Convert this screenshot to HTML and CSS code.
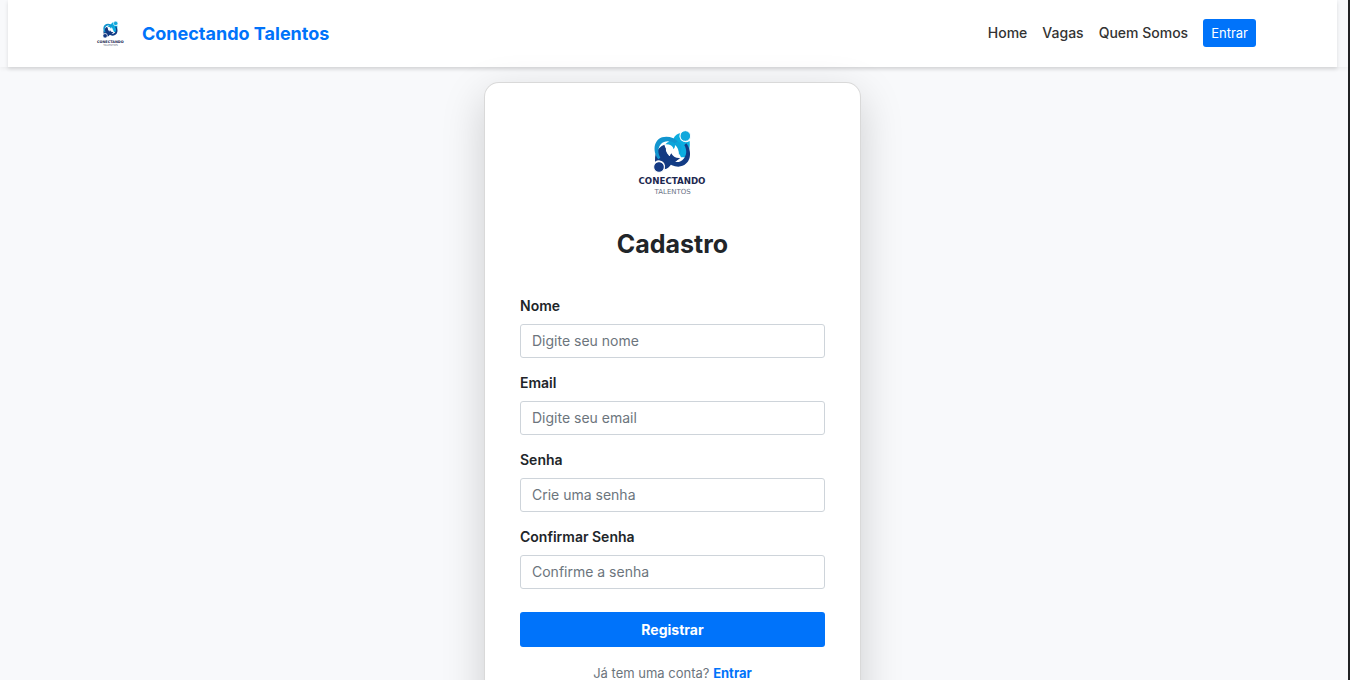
FILE: index.html
```html
<!DOCTYPE html>
<html lang="pt-BR">
<head>
<meta charset="utf-8">
<meta name="viewport" content="width=device-width, initial-scale=1">
<title>Conectando Talentos - Cadastro</title>
<link rel="stylesheet" href="styles.css">
</head>
<body>
<div class="page">
  <header class="topbar">
    <nav class="navbar">
      <a class="brand" href="#"><svg class="brand-logo" viewBox="0 0 285 255" role="img" aria-label="Logo"><use href="#logo"/></svg>Conectando Talentos</a>
      <div class="links">
        <a class="nav-link" href="#">Home</a>
        <a class="nav-link" href="#">Vagas</a>
        <a class="nav-link" href="#">Quem Somos</a>
        <a class="nav-button" href="#">Entrar</a>
      </div>
    </nav>
  </header>
  <main class="content">
    <section class="card">
      <svg class="card-logo" viewBox="0 0 285 255" role="img" aria-label="Conectando Talentos">
        <g id="logo">
          <path fill="#0bade0" d="M145 56Q154 41 165 40Q160 64 182 67Q188 67 194 63Q197 88 184 112L168 112Q160 84 122 72Q132 62 145 56Z"/>
          <path fill="#143a82" d="M139 132Q130 147 119 148Q124 124 102 121Q96 121 90 125Q88 98 103 84Q110 76 118 74Q124 104 162 116Q152 126 139 132Z"/>
          <path fill="#fff" d="M123 72Q140 62 155 76Q168 92 163 112Q146 118 131 106Q116 90 123 72Z"/>
          <path fill="#0da4da" d="M121 73Q142 72 146 88Q151 82 150 75Q162 84 162 106Q176 88 165 68Q145 54 121 73Z"/>
          <path fill="#143a82" d="M166 114Q146 116 139 100Q133 106 134 113Q122 104 122 82Q106 98 119 120Q139 134 166 114Z"/>
          <path fill="#1295cf" d="M100 118C80 92 86 50 124 50C138 50 150 56 158 64L150 70C138 62 118 60 108 72C98 84 98 98 106 113Z"/>
          <path fill="#123c85" d="M184 70C204 96 198 138 160 140C146 140 134 134 126 126L134 118C146 128 166 130 176 116C186 104 186 90 178 75Z"/>
          <circle cx="181" cy="48" r="16" fill="#12a8dc" stroke="#fff" stroke-width="3"/>
          <circle cx="102" cy="141" r="16" fill="#153a84" stroke="#fff" stroke-width="3"/>
          <text class="logo-name" x="141" y="193">CONECTANDO</text>
          <text class="logo-sub" x="143" y="221">TALENTOS</text>
        </g>
      </svg>
      <h1 class="title">Cadastro</h1>
      <form class="form">
        <div class="field"><label for="nome">Nome</label><input id="nome" type="text" placeholder="Digite seu nome"></div>
        <div class="field"><label for="email">Email</label><input id="email" type="email" placeholder="Digite seu email"></div>
        <div class="field"><label for="senha">Senha</label><input id="senha" type="password" placeholder="Crie uma senha"></div>
        <div class="field"><label for="confirmar">Confirmar Senha</label><input id="confirmar" type="password" placeholder="Confirme a senha"></div>
        <button class="submit" type="submit">Registrar</button>
      </form>
      <p class="login">Já tem uma conta? <a href="#">Entrar</a></p>
    </section>
  </main>
</div>
</body>
</html>
```
FILE: styles.css
```css
* { box-sizing: border-box; }
html { height: 100%; }
body {
  margin: 0;
  height: 100%;
  font-family: Inter, "Liberation Sans", sans-serif;
  font-size: 14px;
  line-height: 22px;
  color: #212529;
  background: #f8f9fb;
}
a { color: #0073fa; text-decoration: none; }
.page {
  height: 100%;
  overflow: hidden;
  border-right: 2px solid #212224;
}
.topbar {
  padding: 0 11px 0 8px;
  background: #f8f9fb;
  box-shadow: 0 2px 4px rgba(0, 0, 0, .05);
}
.navbar {
  display: flex;
  align-items: center;
  justify-content: space-between;
  height: 67px;
  padding: 0 81px;
  background: #fff;
  box-shadow: 0 2px 4px rgba(0, 0, 0, .12);
}
.brand {
  display: flex;
  align-items: center;
  gap: 10px;
  font-size: 18px;
  font-weight: 700;
}
.brand-logo { width: 43px; height: 34px; }
.links { display: flex; align-items: center; gap: 15px; padding-bottom: 2px; }
.nav-link { color: #333; font-weight: 500; }
.nav-button {
  padding: 4px 8px;
  border-radius: 3px;
  background: #0073fa;
  color: #fff;
  font-size: 13px;
  line-height: 20px;
}
.content { padding: 15px 11px 0 8px; }
.card {
  width: 377px;
  max-width: 100%;
  margin: 0 auto;
  padding: 37px 35px 36px;
  border: 1px solid rgba(0, 0, 0, .15);
  border-radius: 15px;
  background: #fff;
  box-shadow: 0 14px 43px rgba(0, 0, 0, .175);
}
.card-logo { display: block; width: 95px; height: 85px; margin: 0 auto; }
.logo-name { font: 700 26px "DejaVu Sans", sans-serif; text-anchor: middle; fill: #1c2850; }
.logo-sub { font: 400 21px "DejaVu Sans", sans-serif; text-anchor: middle; fill: #6c7386; }
.title {
  margin: 24px 0 36px;
  font-size: 25px;
  line-height: 30px;
  font-weight: 700;
  text-align: center;
}
.form { display: flex; flex-direction: column; gap: 14px; }
.field { display: flex; flex-direction: column; gap: 7px; }
label { font-weight: 600; }
input {
  width: 100%;
  height: 34px;
  padding: 0 11px 2px;
  border: 1px solid #ced4da;
  border-radius: 3px;
  background: #fff;
  color: #212529;
  font: inherit;
}
input::placeholder { color: #6c757d; opacity: 1; }
.submit {
  height: 35px;
  margin-top: 9px;
  border: 0;
  border-radius: 3px;
  background: #0073fa;
  color: #fff;
  font: inherit;
  font-weight: 700;
}
.login {
  margin: 15px 0 0;
  color: #6c757d;
  font-size: 13px;
  text-align: center;
}
.login a { font-weight: 700; }
```
